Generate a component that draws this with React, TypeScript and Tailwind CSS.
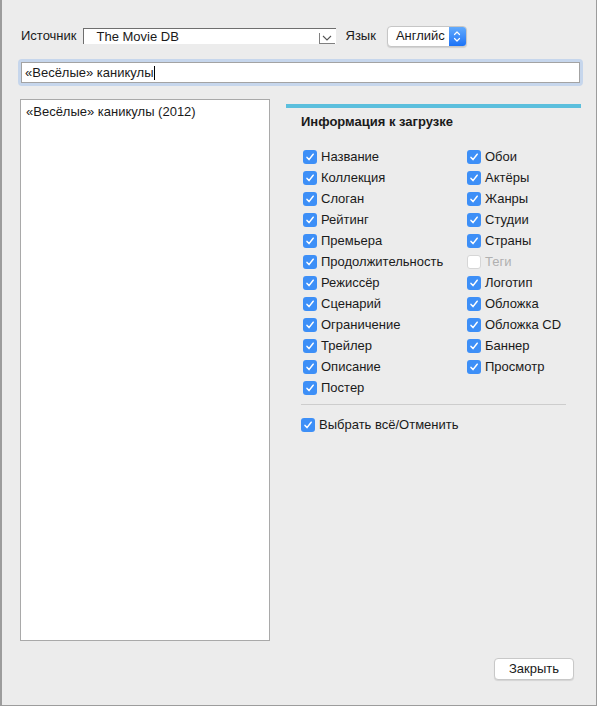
import React, { useState } from 'react';

const leftFields = [
  'Название',
  'Коллекция',
  'Слоган',
  'Рейтинг',
  'Премьера',
  'Продолжительность',
  'Режиссёр',
  'Сценарий',
  'Ограничение',
  'Трейлер',
  'Описание',
  'Постер',
];

const rightFields = [
  'Обои',
  'Актёры',
  'Жанры',
  'Студии',
  'Страны',
  'Теги',
  'Логотип',
  'Обложка',
  'Обложка CD',
  'Баннер',
  'Просмотр',
];

function Check({ checked, disabled }: { checked: boolean; disabled?: boolean }) {
  if (!checked) {
    return (
      <span
        className={`w-[14px] h-[14px] rounded-[3px] border bg-white shrink-0 ${
          disabled ? 'border-[#d6d6d6]' : 'border-[#b4b4b4]'
        }`}
      />
    );
  }
  return (
    <span className="w-[14px] h-[14px] rounded-[3px] bg-[#3d8ff7] shrink-0 flex items-center justify-center">
      <svg width="10" height="10" viewBox="0 0 10 10" fill="none">
        <path d="M2 5.4 L4 7.6 L8.2 2.2" stroke="white" strokeWidth="1.5" strokeLinecap="round" strokeLinejoin="round" />
      </svg>
    </span>
  );
}

function CheckRow({ label, checked, disabled, onToggle }: { label: string; checked: boolean; disabled?: boolean; onToggle: () => void }) {
  return (
    <div
      className="h-[21px] flex items-center gap-[4px] cursor-default select-none"
      onClick={() => !disabled && onToggle()}
    >
      <Check checked={checked} disabled={disabled} />
      <span className={disabled ? 'text-[#b0b0b0]' : 'text-[#1a1a1a]'}>{label}</span>
    </div>
  );
}

export default function App() {
  const [state, setState] = useState<Record<string, boolean>>(() => {
    const s: Record<string, boolean> = {};
    [...leftFields, ...rightFields].forEach(f => (s[f] = f !== 'Теги'));
    return s;
  });
  const toggle = (f: string) => setState(prev => ({ ...prev, [f]: !prev[f] }));

  return (
    <div
      className="w-[597px] h-[706px] bg-[#ececec] border-l-2 border-r border-b border-[#9c9c9c] text-[13px] text-[#1a1a1a] flex flex-col"
      style={{ fontFamily: '"Liberation Sans", Arial, sans-serif' }}
    >
      {/* Source / language */}
      <div className="flex items-center pt-[25px] pl-[19px] h-[47px]">
        <span>Источник</span>
        <div className="ml-[6px] w-[253px] h-[16px] bg-white border-t border-l border-[#6e6e6e] border-b-[#e0e0e0] border-r-[#e0e0e0] flex items-center">
          <span className="pl-[13px] flex-1 leading-none">The Movie DB</span>
          <span className="w-[16px] h-[11px] mr-[1px] mt-[3px] border-l border-b border-[#808080] flex items-center justify-center">
            <svg width="10" height="6" viewBox="0 0 10 6" fill="none">
              <path d="M1 1 L5 5 L9 1" stroke="#555" strokeWidth="1.1" />
            </svg>
          </span>
        </div>
        <span className="ml-[10px]">Язык</span>
        <div className="ml-[11px] w-[80px] h-[21px] rounded-[4px] bg-white border border-[#c6c6c6] shadow-[0_1px_1px_rgba(0,0,0,0.12)] flex overflow-hidden">
          <span className="flex-1 pl-[8px] flex items-center">Английс</span>
          <span className="w-[17px] bg-gradient-to-b from-[#62aafc] to-[#1b72f6] flex items-center justify-center">
            <svg width="8" height="13" viewBox="0 0 8 13" fill="none">
              <path d="M1.5 4.5 L4 2 L6.5 4.5 M1.5 8.5 L4 11 L6.5 8.5" stroke="white" strokeWidth="1.2" strokeLinecap="round" strokeLinejoin="round" />
            </svg>
          </span>
        </div>
      </div>

      {/* Search field */}
      <div className="mt-[12px] ml-[16px] w-[565px] rounded-[4px] border-[3px] border-[#c6d6ec]">
        <div className="h-[21px] bg-white border border-[#a3a3a3] flex items-center pl-[3px]">
          <span>«Весёлые» каникулы</span>
          <span className="w-[1px] h-[14px] bg-black ml-[1px]" />
        </div>
      </div>

      <div className="flex mt-[13px] pl-[18px]">
        {/* Result list */}
        <div className="w-[250px] h-[542px] bg-white border border-[#a9a9a9] pt-[2px] pl-[5px]">
          «Весёлые» каникулы (2012)
        </div>

        {/* Download options */}
        <div className="ml-[16px] w-[295px] pt-[5px]">
          <div className="h-[4px] bg-[#5bbfdd]" />
          <div className="pl-[15px] pt-[4px] font-bold text-[13px]">Информация к загрузке</div>
          <div className="flex pl-[17px] pt-[15px]">
            <div className="w-[164px]">
              {leftFields.map(f => (
                <CheckRow key={f} label={f} checked={state[f]} onToggle={() => toggle(f)} />
              ))}
            </div>
            <div>
              {rightFields.map(f => (
                <CheckRow
                  key={f}
                  label={f}
                  checked={state[f]}
                  disabled={f === 'Теги'}
                  onToggle={() => toggle(f)}
                />
              ))}
            </div>
          </div>
          <div className="ml-[15px] w-[265px] h-px bg-[#cdcdcd] mt-[5px]" />
          <div className="pl-[15px] pt-[10px]">
            <CheckRow label="Выбрать всё/Отменить" checked={true} onToggle={() => {}} />
          </div>
        </div>
      </div>

      <div className="flex justify-end pr-[22px] mt-[17px]">
        <button className="w-[80px] h-[22px] bg-white border border-[#c8c8c8] rounded-[4px] shadow-[0_1px_1px_rgba(0,0,0,0.1)] text-[13px] text-[#1a1a1a]">
          Закрыть
        </button>
      </div>
    </div>
  );
}
